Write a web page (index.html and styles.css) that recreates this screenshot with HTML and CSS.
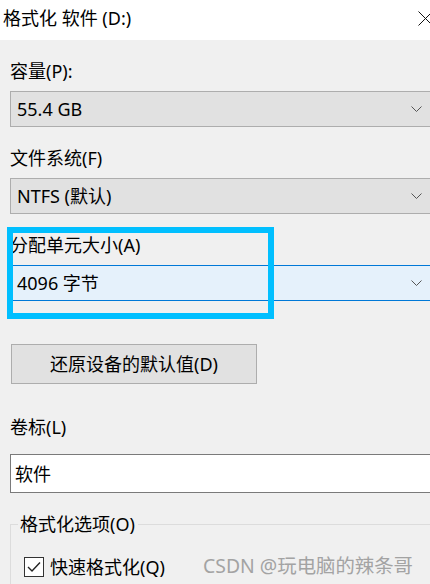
FILE: index.html
```html
<!DOCTYPE html>
<html lang="zh-CN">
<head>
<meta charset="utf-8">
<title>格式化 软件 (D:)</title>
<link rel="stylesheet" href="styles.css">
</head>
<body>
<div class="window">
  <header class="titlebar">
    <span class="title">格式化 软件 (D:)</span>
    <svg class="close" width="15" height="15" viewBox="0 0 15 15"><path d="M0.5 0.5 L14.5 14.5 M14.5 0.5 L0.5 14.5" stroke="#111" stroke-width="1" fill="none"/></svg>
  </header>
  <main class="content">
    <div class="label first">容量(P):</div>
    <div class="combo"><span>55.4 GB</span><svg class="chev" width="11" height="7" viewBox="0 0 11 7"><path d="M0.5 0.5 L5.5 5.5 L10.5 0.5" stroke="#555" stroke-width="1" fill="none"/></svg></div>
    <div class="label">文件系统(F)</div>
    <div class="combo"><span>NTFS (默认)</span><svg class="chev" width="11" height="7" viewBox="0 0 11 7"><path d="M0.5 0.5 L5.5 5.5 L10.5 0.5" stroke="#555" stroke-width="1" fill="none"/></svg></div>
    <div class="label">分配单元大小(A)</div>
    <div class="combo focus"><span>4096 字节</span><svg class="chev" width="11" height="7" viewBox="0 0 11 7"><path d="M0.5 0.5 L5.5 5.5 L10.5 0.5" stroke="#555" stroke-width="1" fill="none"/></svg></div>
    <button class="btn">还原设备的默认值(D)</button>
    <div class="label vol">卷标(L)</div>
    <div class="textbox">软件</div>
    <fieldset class="group">
      <legend>格式化选项(O)</legend>
      <div class="check">
        <span class="box"><svg width="18" height="18" viewBox="0 0 18 18"><path d="M3 9 L7 13 L15 4.5" stroke="#222" stroke-width="1.4" fill="none"/></svg></span>
        <span>快速格式化(Q)</span>
      </div>
    </fieldset>
  </main>
  <div class="highlight"></div>
  <div class="watermark">CSDN @玩电脑的辣条哥</div>
</div>
</body>
</html>
```
FILE: styles.css
```css
html, body {
  margin: 0;
  padding: 0;
  overflow: hidden;
}
body {
  width: 430px;
  height: 584px;
  background: #f0f0f0;
  font-family: "Noto Sans", "Noto Sans CJK SC", sans-serif;
  font-size: 18px;
  color: #000;
}
.window {
  position: relative;
  width: 440px;
  height: 584px;
  background: #f0f0f0;
}
.titlebar {
  height: 40px;
  box-sizing: border-box;
  background: #fff;
  display: flex;
  align-items: center;
  justify-content: space-between;
  padding: 0 7px 4px 3px;
}
.title {
  line-height: 24px;
}
.close {
  display: block;
}
.content {
  padding: 0 0 0 10px;
}
.label {
  height: 24px;
  line-height: 24px;
  margin-top: 19px;
  margin-bottom: 8px;
  white-space: nowrap;
}
.label.vol {
  margin-top: 31px;
  margin-bottom: 15px;
}
.combo {
  height: 36px;
  box-sizing: border-box;
  border: 1px solid #adadad;
  background: #e1e1e1;
  display: flex;
  align-items: center;
  justify-content: space-between;
  padding: 0 17px 0 6px;
  line-height: 24px;
}
.combo.focus {
  border-color: #0078d7;
  background: #e5f1fb;
}
.chev {
  display: block;
  margin-top: 1px;
}
.btn {
  display: flex;
  align-items: center;
  justify-content: center;
  margin: 43px 0 0 1px;
  width: 246px;
  height: 40px;
  box-sizing: border-box;
  border: 1px solid #adadad;
  background: #e1e1e1;
  font: inherit;
  color: #000;
  line-height: 24px;
  padding: 0;
}
.textbox {
  height: 39px;
  box-sizing: border-box;
  border: 1px solid #7a7a7a;
  background: #fff;
  display: flex;
  align-items: center;
  padding-left: 4px;
  line-height: 24px;
}
.group {
  margin: 19px 0 0 0;
  border: 1px solid #dcdcdc;
  padding: 0 0 20px 7px;
}
.group legend {
  padding: 0 3px 0 2px;
  line-height: 24px;
  height: 24px;
}
.check {
  display: flex;
  align-items: center;
  margin: 21px 0 0 6px;
  height: 20px;
  line-height: 24px;
}
.box {
  width: 20px;
  height: 20px;
  box-sizing: border-box;
  border: 1px solid #333;
  background: #fff;
  display: flex;
  align-items: center;
  justify-content: center;
  margin-right: 6px;
}
.box svg {
  display: block;
}
.highlight {
  position: absolute;
  left: 7px;
  top: 227px;
  width: 267px;
  height: 92px;
  box-sizing: border-box;
  border: 6px solid #00bfff;
}
.watermark {
  position: absolute;
  left: 203px;
  top: 554px;
  font-size: 19.4px;
  line-height: 24px;
  color: #a3a3a3;
  white-space: nowrap;
}
```
